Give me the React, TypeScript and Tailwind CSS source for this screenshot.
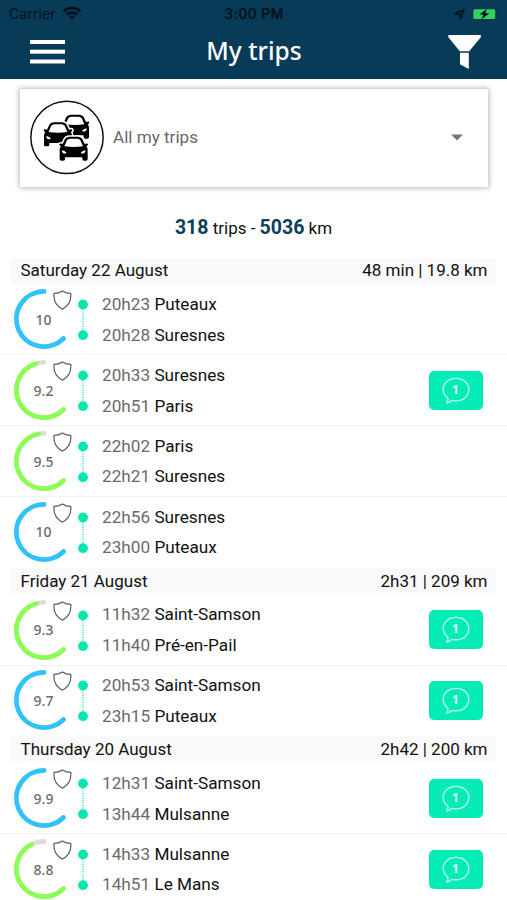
import React from 'react';

interface Trip {
  score: number;
  color: string;
  from: [string, string];
  to: [string, string];
  advices?: number;
}

interface Day {
  label: string;
  total: string;
  trips: Trip[];
}

const BLUE = '#30c3f9';
const GREEN = '#8bfd55';

const days: Day[] = [
  {
    label: 'Saturday 22 August',
    total: '48 min | 19.8 km',
    trips: [
      { score: 10, color: BLUE, from: ['20h23', 'Puteaux'], to: ['20h28', 'Suresnes'] },
      { score: 9.2, color: GREEN, from: ['20h33', 'Suresnes'], to: ['20h51', 'Paris'], advices: 1 },
      { score: 9.5, color: GREEN, from: ['22h02', 'Paris'], to: ['22h21', 'Suresnes'] },
      { score: 10, color: BLUE, from: ['22h56', 'Suresnes'], to: ['23h00', 'Puteaux'] },
    ],
  },
  {
    label: 'Friday 21 August',
    total: '2h31 | 209 km',
    trips: [
      { score: 9.3, color: GREEN, from: ['11h32', 'Saint-Samson'], to: ['11h40', 'Pré-en-Pail'], advices: 1 },
      { score: 9.7, color: BLUE, from: ['20h53', 'Saint-Samson'], to: ['23h15', 'Puteaux'], advices: 1 },
    ],
  },
  {
    label: 'Thursday 20 August',
    total: '2h42 | 200 km',
    trips: [
      { score: 9.9, color: BLUE, from: ['12h31', 'Saint-Samson'], to: ['13h44', 'Mulsanne'], advices: 1 },
      { score: 8.8, color: GREEN, from: ['14h33', 'Mulsanne'], to: ['14h51', 'Le Mans'], advices: 1 },
    ],
  },
];

function StatusBar() {
  return (
    <div className="flex h-7 items-center pl-[9px] pr-[10px] font-['Inter'] text-[14px] leading-7 text-[#02121d]">
      <div className="flex flex-1 items-center gap-[7px]">
        <span className="tracking-[0.1px]">Carrier</span>
        <svg className="-mt-0.5 h-[14px] w-[18px]" viewBox="0 0 18 14" fill="none" stroke="currentColor" strokeWidth="2.6">
          <path d="M1 5.2a11.4 11.4 0 0 1 16 0" />
          <path d="M4 8.5a7.1 7.1 0 0 1 10 0" />
          <path d="M9 13.6 6.3 10.8a4 4 0 0 1 5.4 0Z" fill="currentColor" stroke="none" />
        </svg>
      </div>
      <span className="font-semibold tracking-[0.35px]">3:00 PM</span>
      <div className="-mr-0.5 flex flex-1 items-center justify-end gap-[7px]">
        <svg className="h-[11px] w-[11px]" viewBox="0 0 11 11" fill="none" stroke="currentColor" strokeWidth="1.5" strokeLinejoin="round">
          <path d="M10.2.9 6.3 10 5.7 5.5 1 4.7Z" />
        </svg>
        <svg className="h-3 w-[27px]" viewBox="0 0 27 12">
          <rect x=".6" y=".6" width="23.4" height="10.8" rx="2.8" fill="none" stroke="#17374a" />
          <rect x="1.4" y="1.2" width="21.8" height="9.8" rx="1.6" fill="#36d15c" />
          <path d="M14.8 1 7.4 6.6h4L9.6 11.2 17.4 5.3h-4Z" fill="currentColor" />
          <path d="M25.2 4q1.6 2 0 4Z" fill="#062b40" />
        </svg>
      </div>
    </div>
  );
}

function Header() {
  return (
    <header className="h-[79px] bg-[#083b57]">
      <StatusBar />
      <div className="flex h-[48px] items-center justify-between pl-[30px] pr-[26px] text-white">
        <svg className="h-6 w-[35px]" viewBox="0 0 35 24" fill="currentColor">
          <rect y="0" width="35" height="4" />
          <rect y="9.7" width="35" height="4" />
          <rect y="19.5" width="35" height="4" />
        </svg>
        <h1 className="mr-[5px] pb-[2px] font-['Noto_Sans'] text-[24.5px] font-medium leading-none">My trips</h1>
        <svg className="h-[34px] w-[33px]" viewBox="0 0 33 34" fill="currentColor">
          <path d="M.6 0h32q.6 1.6 0 2.6L21.2 16.2h-9.4L.6 2.6Q-.2 1.4.6 0Z" />
          <path d="M12 17.8h8.8V34L12 29.2Z" />
        </svg>
      </div>
    </header>
  );
}

function Car({ x, y }: { x: number; y: number }) {
  const outline =
    'M2 24Q3 20 12 23L19 8Q22 2 32 1H58Q68 2 71 8L78 23Q87 20 88 24Q88 29 83 30Q87 34 87 41V68Q87 73 82 73H76Q71 73 71 68V63H19V68Q19 73 14 73H8Q3 73 3 68V41Q3 34 7 30Q2 29 2 24Z';
  return (
    <g transform={`translate(${x} ${y})`}>
      <path d={outline} fill="#000" stroke="#fff" strokeWidth="9" paintOrder="stroke" strokeLinejoin="round" />
      <path d="M17 30 24 13Q26 8 33 7H57Q64 8 66 13L73 30Q45 34 17 30Z" fill="#fff" />
      <path d="M10 42Q17 43 24 49Q20 53 14 51Q9 48 10 42ZM80 42Q73 43 66 49Q70 53 76 51Q81 48 80 42Z" fill="#fff" />
    </g>
  );
}

function VehicleFilter() {
  return (
    <div className="ml-[20px] mr-[19px] mt-[9.5px] flex h-[98px] items-center bg-white pl-[6px] pr-[25px] shadow-[0_0_5px_1px_rgba(0,0,0,0.28)]">
      <svg className="size-20" viewBox="0 0 240 240">
        <circle cx="123" cy="118" r="108.5" fill="#fff" stroke="#111" strokeWidth="4.5" />
        <Car x={102} y={49} />
        <Car x={51} y={72} />
        <Car x={98} y={115} />
      </svg>
      <span className="ml-[7px] flex-1 text-[17.1px] text-[#6a6a6a]">All my trips</span>
      <svg className="h-[7px] w-3" viewBox="0 0 12 7">
        <path d="M0 .4h12L6 6.6Z" fill="#757575" />
      </svg>
    </div>
  );
}

// The gauge runs counter-clockwise from the top over 225 degrees.
function arcPath(fromDeg: number, toDeg: number) {
  const point = (deg: number) => {
    const rad = (deg * Math.PI) / 180;
    return `${30 - 27.6 * Math.sin(rad)} ${30 - 27.6 * Math.cos(rad)}`;
  };
  return `M${point(fromDeg)}A27.6 27.6 0 ${toDeg - fromDeg > 180 ? 1 : 0} 0 ${point(toDeg)}`;
}

function ScoreGauge({ score, color }: { score: number; color: string }) {
  const start = (1 - score / 10) * 225;
  return (
    <div className="relative size-[60px]">
      <svg className="size-full overflow-visible" viewBox="0 0 60 60" fill="none" strokeWidth="4.7" strokeLinecap="round">
        <path d={arcPath(0, 225)} stroke="#dcdcdc" />
        <path d={arcPath(score > 9.6 ? 0 : start, 225)} stroke={color} />
      </svg>
      <span className="absolute inset-0 flex items-center justify-center font-['Noto_Sans'] text-[14px] font-medium text-[#6b6b6b]">
        {score}
      </span>
      <svg className="absolute left-[39.5px] top-[1px] h-[20px] w-[19px]" viewBox="0 0 19 20" fill="none" stroke="#5c5c5c" strokeWidth="1.2" strokeLinejoin="round">
        <path d="M9.4.9Q13 3.4 17.8 3.4Q18.7 14.4 9.4 19.2Q.1 14.4 1 3.4Q5.8 3.4 9.4.9Z" />
      </svg>
    </div>
  );
}

function Route() {
  return (
    <svg className="ml-[4px] mt-[2px] h-[42px] w-[10px]" viewBox="0 0 10 42" fill="#05e7ae">
      <path d="M5 10V32" stroke="#05e7ae" strokeWidth="1.2" strokeDasharray="1.2 1.2" />
      <circle cx="5" cy="5.5" r="4.9" />
      <circle cx="5" cy="36.2" r="4.9" />
    </svg>
  );
}

function Stop({ time, city }: { time: string; city: string }) {
  return (
    <p className="text-[17.2px] leading-[30.6px]">
      <span className="text-[#6a6a6a]">{time}</span> {city}
    </p>
  );
}

function AdviceBadge({ count }: { count: number }) {
  return (
    <div className="relative flex h-[39px] w-[54px] items-center justify-center rounded-[5px] bg-[#05ebb5]">
      <svg className="h-[27px] w-[28px]" viewBox="0 0 28 27" fill="none" stroke="#b4fbe8" strokeWidth="1.4" strokeLinejoin="round">
        <path d="M6 21.2Q1.2 17.8 1.2 12.6C1.2 6 6.8 1.4 14 1.4S26.8 6 26.8 12.6 21.2 23.8 14 23.8Q11.8 23.8 10 23.3Q7.6 25.8 4.6 26Q6.2 24 6 21.2Z" />
      </svg>
      <span className="absolute inset-x-0 top-[11px] text-center font-['Noto_Sans'] text-[12px] font-bold leading-4 text-[#d8fff4]">
        {count}
      </span>
    </div>
  );
}

function TripRow({ trip }: { trip: Trip }) {
  return (
    <li className="flex h-[70.8px] items-center border-b border-[#f4f4f4] pl-[13.5px] pr-[24.5px] last:border-transparent">
      <ScoreGauge score={trip.score} color={trip.color} />
      <Route />
      <div className="ml-[14.5px] flex-1 pt-[0.6px]">
        <Stop time={trip.from[0]} city={trip.from[1]} />
        <Stop time={trip.to[0]} city={trip.to[1]} />
      </div>
      {trip.advices && <AdviceBadge count={trip.advices} />}
    </li>
  );
}

export default function App() {
  return (
    <div className="h-[900px] w-full overflow-hidden bg-white font-['Roboto',sans-serif] text-[17px] text-[#111]">
      <Header />
      <VehicleFilter />
      <p className="mt-[26px] h-[45.1px] text-center leading-[30px]">
        <b className="text-[19.5px] font-bold text-[#0b3f5a]">318</b> trips - <b className="text-[19.5px] font-bold text-[#0b3f5a]">5036</b> km
      </p>
      {days.map((day) => (
        <section key={day.label}>
          <h2 className="ml-[11px] mr-[11px] flex h-[27px] items-center justify-between bg-[#f9f9f9] pl-[9.5px] pr-[8.5px]">
            <span>{day.label}</span>
            <span>{day.total}</span>
          </h2>
          <ul>
            {day.trips.map((trip) => (
              <TripRow key={trip.from[0]} trip={trip} />
            ))}
          </ul>
        </section>
      ))}
    </div>
  );
}
